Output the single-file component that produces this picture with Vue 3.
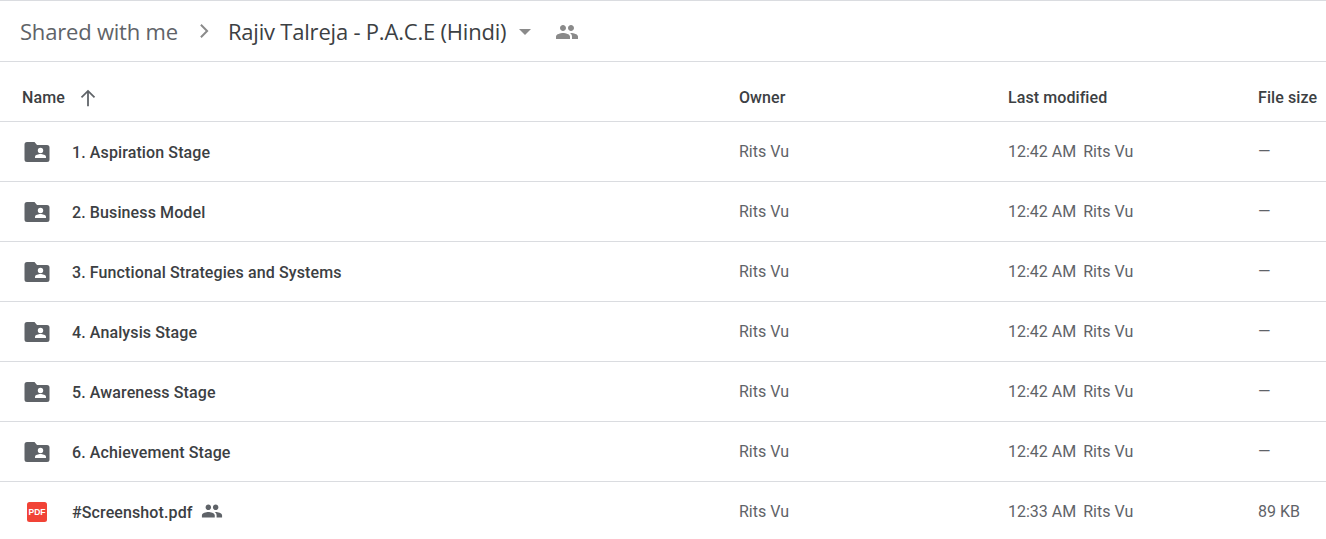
<script setup>
const rows = [
  { name: '1. Aspiration Stage', time: '12:42 AM', size: '—', folder: true },
  { name: '2. Business Model', time: '12:42 AM', size: '—', folder: true },
  { name: '3. Functional Strategies and Systems', time: '12:42 AM', size: '—', folder: true },
  { name: '4. Analysis Stage', time: '12:42 AM', size: '—', folder: true },
  { name: '5. Awareness Stage', time: '12:42 AM', size: '—', folder: true },
  { name: '6. Achievement Stage', time: '12:42 AM', size: '—', folder: true },
  { name: '#Screenshot.pdf', time: '12:33 AM', size: '89 KB', folder: false }
]
const people = 'M16 11c1.66 0 2.99-1.34 2.99-3S17.66 5 16 5s-3 1.34-3 3 1.34 3 3 3zm-8 0c1.66 0 2.99-1.34 2.99-3S9.66 5 8 5 5 6.34 5 8s1.34 3 3 3zm0 2c-2.33 0-7 1.17-7 3.5V19h14v-2.5C15 14.17 10.33 13 8 13zm8 0c-.29 0-.62.02-.97.05 1.16.84 1.97 1.97 1.97 3.45V19h6v-2.5c0-2.33-4.67-3.5-7-3.5z'
</script>

<template>
  <div class="page">
    <header class="crumbs">
      <span class="crumb-root">Shared with me</span>
      <svg class="chevron" width="24" height="24" viewBox="0 0 24 24"><path d="M9.2 6.5 10.6 5.1 17.5 12l-6.900 6.900-1.400-1.400L14.700 12z" fill="#8a8a8a"/></svg>
      <span class="crumb-current">Rajiv Talreja - P.A.C.E (Hindi)</span>
      <span class="caret"></span>
      <svg class="people-head" width="24" height="24" viewBox="0 0 24 24"><path :d="people" fill="#8a8a8a"/></svg>
    </header>

    <div class="grid head">
      <div class="name-head">
        <span>Name</span>
        <svg width="20" height="20" viewBox="0 0 18 18" class="arrow"><path d="M9 1.500 2.600 7.900l1.100 1.100 4.500-4.500V16.500h1.600V4.500l4.500 4.500 1.100-1.100z" fill="#5f6368"/></svg>
      </div>
      <div>Owner</div>
      <div>Last modified</div>
      <div>File size</div>
    </div>

    <div v-for="r in rows" :key="r.name" class="grid row">
      <div class="name-cell">
        <span class="icon" :class="{ 'icon-pdf': !r.folder }">
          <svg v-if="r.folder" width="26" height="22" viewBox="0 0 26 22">
            <path fill-rule="evenodd" fill="#5f6368" d="M3 1h7.500l2.500 3h10a2.500 2.500 0 0 1 2.500 2.500v12A2.500 2.500 0 0 1 23 21H3a2.500 2.500 0 0 1-2.500-2.500v-15A2.500 2.500 0 0 1 3 1z"/>
            <circle cx="16.500" cy="9.500" r="2.700" fill="#fff"/>
            <path fill="#fff" d="M11 17v-1.300c0-1.800 3.600-2.700 5.500-2.700s5.500.9 5.500 2.700V17z"/>
          </svg>
          <svg v-else width="20" height="20" viewBox="0 0 20 20">
            <rect width="20" height="20" rx="2.500" fill="#f14336"/>
            <text x="10" y="13.300" text-anchor="middle" class="pdf">PDF</text>
          </svg>
        </span>
        <span class="file-name">{{ r.name }}</span>
        <svg v-if="!r.folder" class="shared" width="22" height="22" viewBox="0 0 24 24"><path :d="people" fill="#5f6368"/></svg>
      </div>
      <div>Rits Vu</div>
      <div class="modified"><span class="time">{{ r.time }}</span><span>Rits Vu</span></div>
      <div>{{ r.size }}</div>
    </div>
  </div>
</template>

<style>
html, body { margin: 0; background: #fff; overflow: hidden; }
</style>

<style scoped>
.page {
  width: 1326px;
  height: 539px;
  overflow: hidden;
  border-top: 1px solid #dadce0;
  box-sizing: border-box;
  font-family: Roboto, "Liberation Sans", sans-serif;
  background: #fff;
}
.crumbs {
  height: 60px;
  display: flex;
  align-items: center;
  padding-left: 20px;
  border-bottom: 1px solid #dadce0;
  font-family: "Open Sans", sans-serif;
  font-size: 22px;
  letter-spacing: -0.2px;
}
.crumb-root { color: #5f6368; }
.chevron { margin-left: 13px; margin-right: 13px; }
.crumb-current { color: #3c4043; }
.caret {
  margin-left: 13px;
  margin-top: 2px;
  width: 0;
  height: 0;
  border-left: 6px solid transparent;
  border-right: 6px solid transparent;
  border-top: 6px solid #8a8a8a;
}
.people-head { margin-left: 24px; margin-top: 2px; }
.grid {
  display: grid;
  grid-template-columns: 739px 269px 250px 1fr;
  height: 60px;
  box-sizing: border-box;
  align-items: center;
  border-bottom: 1px solid #dadce0;
  font-size: 16px;
  white-space: nowrap;
}
.head { color: #3c4043; font-weight: 500; padding-top: 12px; letter-spacing: 0.08px; }
.name-head { display: flex; align-items: center; padding-left: 22px; }
.arrow { margin-left: 13px; }
.row { color: #5f6368; }
.row:last-child { border-bottom-color: transparent; }
.name-cell { display: flex; align-items: center; }
.icon { width: 72px; flex: none; display: flex; box-sizing: border-box; padding-left: 24px; }
.icon-pdf { padding-left: 27px; }
.file-name { color: #3c4043; font-weight: 500; margin-top: 1px; letter-spacing: 0.11px; }
.shared { margin-left: 8px; margin-top: -2px; }
.modified { display: flex; }
.time { margin-right: 7px; }
.pdf { font: 700 8.500px "Liberation Sans", sans-serif; fill: #fff; }
</style>
